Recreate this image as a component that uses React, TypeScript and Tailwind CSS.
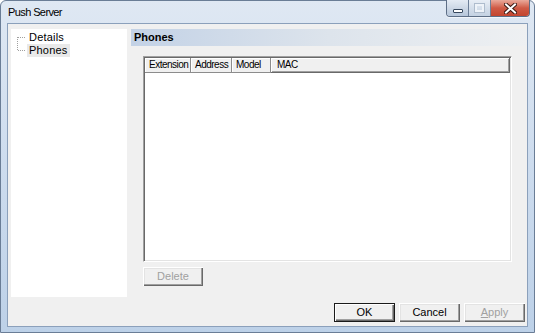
import React from "react";

function CaptionButtons() {
  return (
    <div className="flex h-[17px] -mt-px rounded-b-[4px] border border-t-0 border-[#5d6e86] overflow-hidden shadow-[0_1px_0_rgba(255,255,255,0.6)]">
      <div className="w-[22px] h-full flex items-end justify-center pb-[3px] bg-gradient-to-b from-[#e4ebf4] via-[#cdd8e6] to-[#b6c6da] border-r border-[#6d7f98]">
        <div className="w-[10px] h-[4px] bg-white border border-[#36475d] rounded-[1px]" />
      </div>
      <div className="w-[22px] h-full flex items-center justify-center bg-gradient-to-b from-[#e8eef6] via-[#d5dfeb] to-[#c4d2e3] border-r border-[#6d7f98]">
        <div className="w-[9px] h-[8px] border-[2px] border-[#eef3f9] shadow-[0_0_0_1px_#aebccd]" />
      </div>
      <div className="w-[38px] h-full flex items-center justify-center bg-gradient-to-b from-[#e9a99b] via-[#cf5a45] to-[#c2452f]">
        <svg width="13" height="11" viewBox="0 0 13 11">
          <path d="M2 1.5 L11 9.5 M11 1.5 L2 9.5" stroke="#3d1a14" strokeWidth="4" strokeLinecap="square" />
          <path d="M2 1.5 L11 9.5 M11 1.5 L2 9.5" stroke="#ffffff" strokeWidth="2" strokeLinecap="square" />
        </svg>
      </div>
    </div>
  );
}

function Btn({
  children,
  disabled,
  isDefault,
  className = "",
}: {
  children: React.ReactNode;
  disabled?: boolean;
  isDefault?: boolean;
  className?: string;
}) {
  const base =
    "h-[19px] flex items-center justify-center text-[11px] leading-none bg-[#f0f0f0] ";
  const edge = isDefault
    ? "border border-[#1a1a1a] shadow-[inset_1px_1px_#ffffff,inset_-1px_-1px_#696969,inset_-2px_-2px_#a0a0a0]"
    : "shadow-[inset_1px_1px_#ffffff,inset_-1px_-1px_#696969,inset_-2px_-2px_#a0a0a0,inset_2px_2px_#e3e3e3]";
  const color = disabled ? "text-[#a0a0a0]" : "text-black";
  return <div className={base + edge + " " + color + " " + className}>{children}</div>;
}

export default function App() {
  const cols = [
    { label: "Extension", w: "w-[46px]" },
    { label: "Address", w: "w-[41px]" },
    { label: "Model", w: "w-[39px]" },
  ];
  return (
    <div className="w-[535px] h-[333px] font-['Liberation_Sans',Arial,sans-serif] text-black">
      <div className="w-full h-full flex flex-col border border-[#6a7d96] rounded-t-[6px] bg-gradient-to-b from-[#dfe8f3] via-[#cddcee] to-[#bdd1e8] px-[6px] pb-[5px]">
        {/* Title bar */}
        <div className="h-[22px] flex items-start shrink-0">
          <div className="pl-[1px] pt-[5px] text-[11px] leading-[13px] tracking-[-0.6px] text-black">
            Push Server
          </div>
          <div className="ml-auto mr-[-2px]">
            <CaptionButtons />
          </div>
        </div>
        {/* Client area */}
        <div className="flex-1 flex flex-col border border-[#8ba0bb] bg-[#f0f0f0] pl-[3px] pt-[5px]">
          <div className="h-[268px] flex gap-[4px] shrink-0">
            {/* Tree */}
            <div className="w-[116px] h-full bg-white pl-[5px] pt-[1px]">
              <div className="flex">
                <svg width="11" height="28" viewBox="0 0 11 28" className="shrink-0">
                  <path
                    d="M1.5 7 L1.5 21 M2 7.5 L10 7.5 M2 20.5 L10 20.5"
                    stroke="#a0a0a0"
                    strokeWidth="1"
                    strokeDasharray="1 1"
                    fill="none"
                  />
                </svg>
                <div className="flex flex-col text-[11px] tracking-[0.2px]">
                  <div className="h-[14px] leading-[14px] pl-[2px]">Details</div>
                  <div className="h-[13px] leading-[13px] px-[2px] bg-[#e9e9e9] self-start">Phones</div>
                </div>
              </div>
            </div>
            {/* Right panel */}
            <div className="flex-1 flex flex-col">
              <div className="h-[17px] shrink-0 bg-gradient-to-r from-[#c3d2e6] via-[#dde4ec] to-[#eef0f2] pl-[3px] text-[11px] font-bold leading-[17px]">
                Phones
              </div>
              <div className="ml-[12px] mt-[10px] w-[369px] h-[206px] flex flex-col bg-white border border-t-[#a0a0a0] border-l-[#a0a0a0] border-r-white border-b-white shadow-[inset_1px_1px_#696969,inset_-1px_-1px_#e3e3e3] p-[1px]">
                <div className="h-[15px] flex bg-[#f0f0f0] text-[10px] tracking-[-0.5px] leading-[14px] shrink-0">
                  {cols.map((c) => (
                    <div
                      key={c.label}
                      className={c.w + " shrink-0 pl-[4px] border-r border-b border-[#8c8c8c] shadow-[inset_1px_1px_#ffffff]"}
                    >
                      {c.label}
                    </div>
                  ))}
                  <div className="flex-1 pl-[6px] border-r border-b border-[#696969] shadow-[inset_1px_1px_#ffffff,inset_-1px_-1px_#a0a0a0]">
                    MAC
                  </div>
                </div>
              </div>
              <Btn disabled className="ml-[12px] mt-[5px] w-[60px]">
                Delete
              </Btn>
            </div>
          </div>
          <div className="mt-[6px] flex justify-end gap-[4px] pr-[2px]">
            <Btn isDefault className="w-[61px]">OK</Btn>
            <Btn className="w-[61px]">Cancel</Btn>
            <Btn disabled className="w-[61px]">
              <span className="underline decoration-[#a0a0a0] underline-offset-[1px]">A</span>pply
            </Btn>
          </div>
        </div>
      </div>
    </div>
  );
}
